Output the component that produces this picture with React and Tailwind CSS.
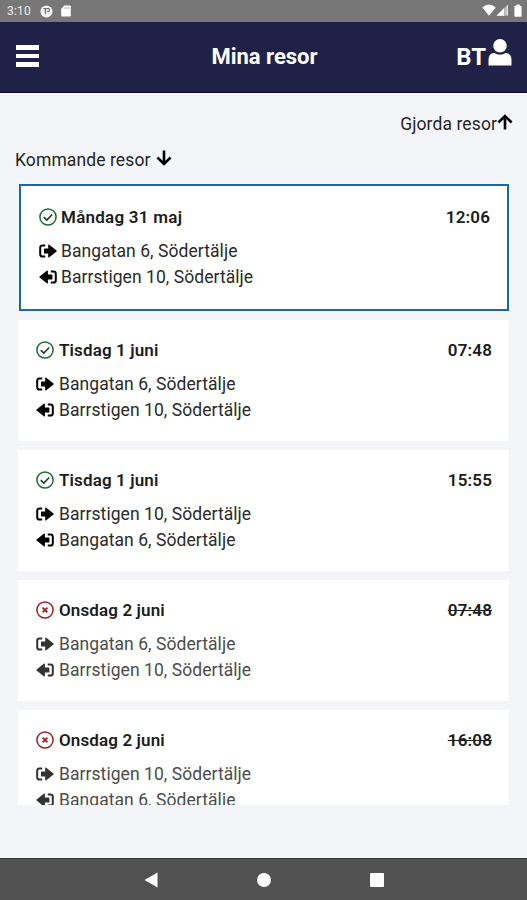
import React from "react";
import clsx from "clsx";

const TRIPS = [
  {
    id: 1,
    day: "Måndag 31 maj",
    time: "12:06",
    from: "Bangatan 6, Södertälje",
    to: "Barrstigen 10, Södertälje",
    selected: true,
  },
  {
    id: 2,
    day: "Tisdag 1 juni",
    time: "07:48",
    from: "Bangatan 6, Södertälje",
    to: "Barrstigen 10, Södertälje",
  },
  {
    id: 3,
    day: "Tisdag 1 juni",
    time: "15:55",
    from: "Barrstigen 10, Södertälje",
    to: "Bangatan 6, Södertälje",
  },
  {
    id: 4,
    day: "Onsdag 2 juni",
    time: "07:48",
    from: "Bangatan 6, Södertälje",
    to: "Barrstigen 10, Södertälje",
    cancelled: true,
  },
  {
    id: 5,
    day: "Onsdag 2 juni",
    time: "16:08",
    from: "Barrstigen 10, Södertälje",
    to: "Bangatan 6, Södertälje",
    cancelled: true,
  },
];

function StatusIcon({ cancelled }) {
  return (
    <svg
      viewBox="0 0 18 18"
      fill="none"
      stroke="currentColor"
      className={clsx("size-[18px] shrink-0 mb-0.5", cancelled ? "text-[#a01f26]" : "text-[#1c6b33]")}
    >
      <circle cx="9" cy="9" r="8.1" strokeWidth="1.5" />
      {cancelled ? (
        <path d="M6.6 6.6l4.8 4.8M11.4 6.6l-4.8 4.8" strokeWidth="1.8" />
      ) : (
        <path d="M4.8 9.1l3 2.9 5.4-5.5" stroke="#16401f" strokeWidth="1.6" />
      )}
    </svg>
  );
}

function LeaveIcon() {
  return (
    <svg viewBox="0 0 18 14" className="w-[18px] h-3.5 shrink-0">
      <path
        d="M6.2 1.4H3.6Q1.2 1.4 1.2 3.8v6.4q0 2.4 2.4 2.4h2.6"
        fill="none"
        stroke="currentColor"
        strokeWidth="2"
      />
      <path
        d="M5.6 4.4h3.6V1.3q0-1.4 1.1-.6l7.2 5.7q.7.6 0 1.2l-7.2 5.7q-1.1.8-1.1-.6V9.6H5.6q-.6 0-.6-.6V5q0-.6.6-.6z"
        fill="currentColor"
      />
    </svg>
  );
}

function ArriveIcon() {
  return (
    <svg viewBox="0 0 18 14" className="w-[18px] h-3.5 shrink-0">
      <path
        d="M11.8 1.4h2.6q2.4 0 2.4 2.4v6.4q0 2.4-2.4 2.4h-2.6"
        fill="none"
        stroke="currentColor"
        strokeWidth="2"
      />
      <path
        d="M12.8 4.4H8.9V1.3q0-1.4-1.1-.6L.6 6.4q-.7.6 0 1.2l7.2 5.7q1.1.8 1.1-.6V9.6h3.9q.6 0 .6-.6V5q0-.6-.6-.6z"
        fill="currentColor"
      />
    </svg>
  );
}

function ArrowIcon({ up }) {
  return (
    <svg
      viewBox="0 0 16 16"
      fill="none"
      stroke="currentColor"
      strokeWidth="2.6"
      className={clsx("size-4 text-black", up && "rotate-180")}
    >
      <path d="M8 .4v13.6M1.4 7.5L8 13.9l6.6-6.4" />
    </svg>
  );
}

function TripCard({ trip }) {
  const { day, time, from, to, selected, cancelled } = trip;

  return (
    <div
      className={clsx(
        "bg-white shrink-0 mb-[9px] pl-[18px] pr-[17px]",
        selected ? "ml-px h-[127px] border-2 border-[#1a67a8] pt-5" : "h-[121px] pt-[19px]"
      )}
    >
      <div className="flex items-center h-6 text-[17px] font-semibold text-[#1c1c1c]">
        <StatusIcon cancelled={cancelled} />
        <span className={selected ? "ml-1 tracking-[0.25px]" : "ml-[5px] tracking-[0.12px]"}>{day}</span>
        <span className={clsx("ml-auto tracking-[0.15px]", cancelled && "line-through decoration-1")}>{time}</span>
      </div>
      <div className={clsx("mt-2 text-[17.5px] tracking-[0.06px]", cancelled ? "text-[#4c4c4c]" : "text-[#2a2a2a]")}>
        <div className="flex items-center h-[26px]">
          <span className={clsx("flex", cancelled ? "text-[#333]" : "text-black")}>
            <LeaveIcon />
          </span>
          <span className={selected ? "ml-1" : "ml-[5px]"}>{from}</span>
        </div>
        <div className="flex items-center h-[26px]">
          <span className={clsx("flex", cancelled ? "text-[#333]" : "text-black")}>
            <ArriveIcon />
          </span>
          <span className={selected ? "ml-1" : "ml-[5px]"}>{to}</span>
        </div>
      </div>
    </div>
  );
}

function StatusBar() {
  return (
    <div className="flex items-center h-[22px] pl-[7px] pr-[5px] bg-[#777] text-[#eee]">
      <span className="text-xs tracking-[0.2px]">3:10</span>
      <svg viewBox="0 0 14 14" className="size-[13px] ml-[9px]">
        <circle cx="7" cy="7" r="6.5" fill="#f5f5f5" />
        <path d="M3.6 3.8h6q1.2 1.7 0 3.2H7.4M5.8 4v6" fill="none" stroke="#777" strokeWidth="1.3" />
      </svg>
      <svg viewBox="0 0 10 12" className="w-2.5 h-3 ml-2">
        <path d="M3.4.5H9q.8 0 .8.8v9.4q0 .8-.8.8H1q-.8 0-.8-.8V3.8z" fill="#fff" />
        <path d="M4 2v2M6 2v2M8 2v2" stroke="#999" strokeWidth=".7" />
      </svg>
      <div className="ml-auto mb-0.5 flex items-center">
        <svg viewBox="0 0 14 12" className="w-3.5 h-3">
          <path d="M.3 3.4Q7-2.2 13.7 3.4L7 11.7z" fill="#fff" />
        </svg>
        <svg viewBox="0 0 12 12" className="size-3">
          <path d="M12 .3v11.4H.5z" fill="#bbb" />
          <path d="M8 4.2v7.5H.5z" fill="#fff" />
          <path d="M11.4 2v9.2" stroke="#eee" strokeWidth="1" />
        </svg>
        <svg viewBox="0 0 8 13" className="w-2 h-[13px] ml-1.5">
          <path d="M2.4.5h3.2v1.2h1q1 0 1 1V12q0 .8-1 .8H1.4q-1 0-1-.8V2.7q0-1 1-1h1z" fill="#fff" />
        </svg>
      </div>
    </div>
  );
}

function Header() {
  return (
    <header className="grid grid-cols-[1fr_auto_1fr] items-center h-[71px] bg-[#1f2147] border-b border-[#0c0d24] text-white font-bold">
      <button className="ml-4 mb-0.5 w-[23px] flex flex-col gap-1">
        <span className="h-[4.5px] bg-white" />
        <span className="h-[4.5px] bg-white" />
        <span className="h-[4.5px] bg-white" />
      </button>
      <h1 className="text-[22px] leading-7 ml-0.5">Mina resor</h1>
      <div className="flex justify-end items-center pr-[15px]">
        <span className="text-[24px] leading-7">BT</span>
        <svg viewBox="0 0 24 28" className="w-6 h-7 ml-0.5 mb-2.5" fill="#fff">
          <circle cx="12" cy="7.8" r="6.8" />
          <path d="M.5 27.5v-5.6q0-6.6 5.7-6.9 5.8 3.6 11.6 0 5.7.3 5.7 6.9v5.6z" />
        </svg>
      </div>
    </header>
  );
}

function NavBar() {
  return (
    <nav className="flex items-center h-[42px] bg-[#525252] border-t border-[#333]">
      <svg viewBox="0 0 14 16" className="w-3.5 h-4 ml-36" fill="#fff">
        <path d="M13.5.5v15L.5 8z" />
      </svg>
      <span className="size-3.5 ml-[99px] rounded-full bg-white" />
      <span className="size-3.5 ml-[99px] rounded-[1px] bg-white" />
    </nav>
  );
}

export default function App() {
  return (
    <div className="flex flex-col w-[527px] h-[900px] overflow-hidden bg-[#f3f5f9] font-['Roboto',sans-serif] text-[#252525]">
      <StatusBar />
      <Header />
      <div className="flex justify-end items-center h-[26px] mt-[18px] pr-3.5 text-[17.5px] tracking-[0.1px]">
        <span>Gjorda resor</span>
        <span className="mb-1">
          <ArrowIcon up />
        </span>
      </div>
      <div className="flex items-center h-[26px] mt-2.5 pl-[15px] text-[17.5px] tracking-[0.1px]">
        <span>Kommande resor</span>
        <span className="mb-1 ml-[5px]">
          <ArrowIcon />
        </span>
      </div>
      <div className="flex flex-col h-[621px] mt-[11px] mx-[18px] overflow-hidden">
        {TRIPS.map((trip) => (
          <TripCard key={trip.id} trip={trip} />
        ))}
      </div>
      <div className="mt-auto border-t border-white">
        <NavBar />
      </div>
    </div>
  );
}
